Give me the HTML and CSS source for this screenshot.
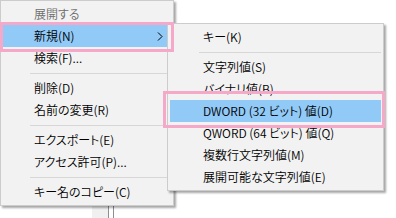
FILE: index.html
```html
<!DOCTYPE html>
<html lang="ja">

<head>
    <meta charset="UTF-8">
    <title>新規 メニュー</title>
    <link rel="stylesheet" href="styles.css">
</head>

<body>
    <div class="screen">
        <div class="window">
            <div class="tree">
                <div class="tree-row"></div>
            </div>
            <div class="splitter"></div>
            <div class="list"></div>
        </div>

        <div class="menu main-menu">
            <div class="item disabled">展開する</div>
            <div class="item active">新規(N)
                <svg class="arrow" width="6" height="9" viewBox="0 0 6 9">
                    <polyline points="1,0.5 5,4.5 1,8.5" fill="none" stroke="#000" stroke-width="1" />
                </svg>
            </div>
            <div class="item">検索(F)...</div>
            <div class="sep"></div>
            <div class="item">削除(D)</div>
            <div class="item">名前の変更(R)</div>
            <div class="sep"></div>
            <div class="item">エクスポート(E)</div>
            <div class="item">アクセス許可(P)...</div>
            <div class="sep"></div>
            <div class="item">キー名のコピー(C)</div>
        </div>

        <div class="menu sub-menu">
            <div class="item">キー(K)</div>
            <div class="sep"></div>
            <div class="item">文字列値(S)</div>
            <div class="item">バイナリ値(B)</div>
            <div class="item active">DWORD (32 ビット) 値(D)</div>
            <div class="item">QWORD (64 ビット) 値(Q)</div>
            <div class="item">複数行文字列値(M)</div>
            <div class="item">展開可能な文字列値(E)</div>
        </div>

        <!-- annotation boxes -->
        <div class="mark mark-new"></div>
        <div class="mark mark-dword"></div>
    </div>
</body>

</html>
```

FILE: styles.css
```css
* {
    margin: 0;
    padding: 0;
    box-sizing: border-box;
}

body {
    font-family: "Noto Sans CJK JP", "Noto Sans", sans-serif;
    font-size: 12px;
    font-weight: 350;
    line-height: 1;
    color: #000;
    background: #fff;
}

.screen {
    position: relative;
    width: 396px;
    height: 218px;
    overflow: hidden;
    background: #fff;
}

/* window behind the menus */
.window {
    display: flex;
    height: 100%;
}

.tree {
    width: 92px;
}

.tree-row {
    width: 4px;
    height: 3px;
    background: #cce8ff;
}

.splitter {
    width: 17px;
    background: #f0f0f0;
    border-right: 1px solid #8f8f8f;
}

.list {
    flex: 1;
    margin-left: 4px;
    border-left: 1px solid #8f8f8f;
}

/* menus */
.menu {
    position: absolute;
    background: #f2f2f2;
    border: 1px solid #cccccc;
    padding: 2px;
    box-shadow: 2px 2px 2px rgba(0, 0, 0, 0.35);
    font-feature-settings: "palt";
}

.main-menu {
    left: 0;
    top: 0;
    width: 174px;
}

.sub-menu {
    left: 167px;
    top: 23px;
    width: 217px;
}

.item {
    position: relative;
    display: flex;
    align-items: center;
    height: 22px;
    padding-left: 31px;
    white-space: nowrap;
}

.sub-menu .item {
    padding-left: 33px;
}

.item.active {
    background: #91c9f7;
}

.item.disabled {
    color: #6d6d6d;
}

.arrow {
    position: absolute;
    right: 8px;
    top: 7px;
}

.sep {
    display: flex;
    align-items: center;
    height: 8px;
    margin-left: 27px;
}

.sub-menu .sep {
    margin-left: 29px;
}

.sep::after {
    content: '';
    flex: 1;
    height: 1px;
    background: #d7d7d7;
}

/* pink highlight boxes */
.mark {
    position: absolute;
    border: 3px solid #f5a8c7;
}

.mark-new {
    left: 0;
    top: 22px;
    width: 174px;
    height: 30px;
}

.mark-dword {
    left: 163px;
    top: 91px;
    width: 222px;
    height: 37px;
}
```
